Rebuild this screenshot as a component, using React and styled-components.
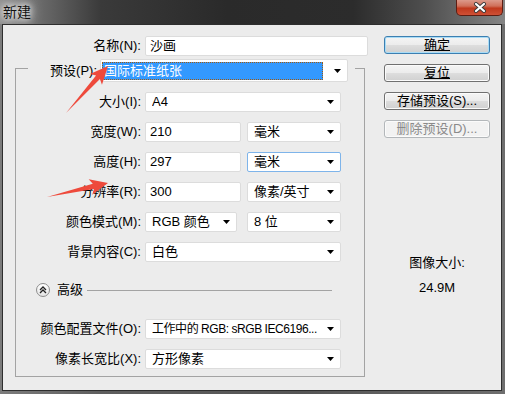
import React from "react";
import styled, { createGlobalStyle } from "styled-components";

const GlobalStyle = createGlobalStyle`
  html, body { margin: 0; padding: 0; }
  body {
    width: 505px;
    height: 394px;
    overflow: hidden;
    background: #747474;
    font-family: "Liberation Sans", "Noto Sans CJK SC", sans-serif;
    font-size: 13px;
    color: #000;
  }
`;

const Window = styled.div`
  position: relative;
  width: 505px;
  height: 394px;
  display: flex;
  flex-direction: column;
  background: linear-gradient(to right, #7c7c7c, #5e5e5e 20%, #555 60%, #6e6e6e);
`;

const TitleBar = styled.div`
  height: 24px;
  display: flex;
  justify-content: space-between;
  align-items: flex-start;
  background: linear-gradient(
    to right,
    #909090 0%,
    #6a6a6a 8%,
    #3a3a3a 20%,
    #2a2a2a 45%,
    #2c2c2c 70%,
    #4e4e4e 84%,
    #858585 100%
  );
`;

const Title = styled.div`
  padding-left: 3px;
  line-height: 22px;
  font-size: 14px;
  font-family: "Noto Sans CJK SC", sans-serif;
  color: #111;
  text-shadow: 0 0 6px #fff, 0 0 10px #eee, 0 0 14px #ddd;
`;

const CloseBtn = styled.div`
  box-sizing: border-box;
  width: 47px;
  height: 16px;
  margin-right: 2px;
  border: 1px solid #5e1d12;
  border-top: none;
  border-radius: 0 0 5px 5px;
  background: linear-gradient(#dc9a8b 0%, #d0705a 40%, #c0391d 55%, #cf5036 100%);
  display: flex;
  align-items: center;
  justify-content: center;
`;

const Client = styled.div`
  box-sizing: border-box;
  width: 500px;
  height: 367px;
  margin-left: 2px;
  border: 1px solid #2e2e2e;
  background: #ececec;
  display: flex;
`;

const LeftCol = styled.div`
  width: 353px;
  margin-left: 12px;
  padding-top: 11px;
`;

const RightCol = styled.div`
  width: 106px;
  margin-left: 16px;
  padding-top: 11px;
  display: flex;
  flex-direction: column;
  gap: 10px;
`;

const Row = styled.div`
  display: flex;
  align-items: center;
  gap: 4px;
  height: 20px;
`;

const Label = styled.div`
  width: ${(p) => p.$w}px;
  text-align: right;
  white-space: nowrap;
  line-height: 20px;
`;

const Input = styled.div`
  box-sizing: border-box;
  width: ${(p) => p.$w}px;
  height: 20px;
  padding: 0 4px;
  background: #fff;
  border: 1px solid #dcdcdc;
  border-radius: 2px;
  line-height: 18px;
  white-space: nowrap;
`;

const SelectBox = styled.div`
  box-sizing: border-box;
  width: ${(p) => p.$w}px;
  height: ${(p) => p.$h || 20}px;
  margin-left: ${(p) => p.$ml || 0}px;
  margin-top: ${(p) => p.$mt || 0}px;
  padding: 0 6px;
  background: #fff;
  border: 1px solid ${(p) => (p.$focus ? "#7eb4ea" : "#dcdcdc")};
  border-radius: 2px;
  display: flex;
  align-items: center;
  gap: 3px;
  flex-shrink: 0;
`;

const SelectText = styled.span`
  flex: 1;
  overflow: hidden;
  white-space: nowrap;
  line-height: 18px;
  font-size: ${(p) => (p.$small ? 12 : 13)}px;
  letter-spacing: ${(p) => (p.$small ? "-0.45px" : "normal")};
`;

const Highlight = styled.span`
  flex: 1;
  align-self: stretch;
  margin: 2px 8px 1px -5px;
  padding-left: 1px;
  background: #3399ff;
  color: #fff;
  border: 1px dotted #a05a10;
  line-height: 15px;
  white-space: nowrap;
`;

const GroupBox = styled.fieldset`
  box-sizing: border-box;
  width: 350px;
  min-width: 0;
  margin: 4px 0 0 0;
  padding: 0 0 7px 0;
  border: 1px solid #a3a3a3;
`;

const Legend = styled.legend`
  margin-left: 12px;
  padding: 0 7px 0 0;
`;

const LegendRow = styled.div`
  display: flex;
  gap: 3px;
  height: 16px;
`;

const LegendLabel = styled.div`
  width: 69px;
  margin-top: -1px;
  text-align: right;
  line-height: 23px;
  white-space: nowrap;
`;

const GroupBody = styled.div`
  padding-top: 16px;
  display: flex;
  flex-direction: column;
  gap: 10px;
`;

const AdvancedRow = styled.div`
  display: flex;
  align-items: center;
  height: 14px;
  margin: 11px 0 12px;
`;

const Toggle = styled.div`
  box-sizing: border-box;
  width: 14px;
  height: 14px;
  margin-left: 20px;
  border-radius: 50%;
  border: 1px solid #8d8d8d;
  background: linear-gradient(#ffffff, #e4e4e4);
  display: flex;
  align-items: center;
  justify-content: center;
`;

const AdvancedText = styled.span`
  margin-left: 7px;
  line-height: 14px;
`;

const Rule = styled.div`
  flex: 1;
  margin: 0 32px 0 4px;
  border-top: 1px solid #a3a3a3;
`;

const Button = styled.div`
  box-sizing: border-box;
  height: 18px;
  border-radius: 3px;
  border: 1px solid
    ${(p) => (p.$primary ? "#3c7fb1" : p.$disabled ? "#b3b7ba" : "#707070")};
  background: ${(p) =>
    p.$disabled
      ? "#f2f2f2"
      : "linear-gradient(#f4f4f4 0%, #ececec 48%, #dddddd 52%, #d0d0d0 100%)"};
  box-shadow: ${(p) => (p.$primary ? "inset 0 0 0 1px #a9dcf6" : "inset 0 0 0 1px #fbfbfb")};
  color: ${(p) => (p.$disabled ? "#8a8a8a" : "#000")};
  text-align: center;
  line-height: 16px;
  white-space: nowrap;
  span {
    text-decoration: ${(p) => (p.$underline ? "underline" : "none")};
    text-underline-offset: 1px;
  }
`;

const Info = styled.div`
  margin-top: 102px;
  text-align: center;
  line-height: 25px;
`;

const Overlay = styled.svg`
  position: absolute;
  left: 0;
  top: 0;
  pointer-events: none;
`;

function DropArrow() {
  return (
    <svg width="7" height="4" viewBox="0 0 7 4">
      <path d="M0 0 H7 L3.5 4 Z" fill="#000" />
    </svg>
  );
}

function Select({ w, ml, focus, small, children }) {
  return (
    <SelectBox $w={w} $ml={ml} $focus={focus}>
      <SelectText $small={small}>{children}</SelectText>
      <DropArrow />
    </SelectBox>
  );
}

function arrowPoints(x1, y1, x2, y2) {
  const dx = x2 - x1;
  const dy = y2 - y1;
  const len = Math.hypot(dx, dy);
  const ux = dx / len;
  const uy = dy / len;
  const nx = -uy;
  const ny = ux;
  const pts = [
    [0, 0],
    [len - 15, -2.6],
    [len - 18, -8],
    [len, 0],
    [len - 18, 8],
    [len - 15, 2.6],
  ];
  return pts.map(([a, b]) => `${x1 + ux * a + nx * b},${y1 + uy * a + ny * b}`).join(" ");
}

export default function App() {
  return (
    <>
      <GlobalStyle />
      <Window>
        <TitleBar>
          <Title>新建</Title>
          <CloseBtn>
            <svg width="14" height="11" viewBox="0 0 14 11">
              <path d="M3 2 L11 9 M11 2 L3 9" stroke="#3a3a3a" strokeWidth="4" strokeLinecap="round" />
              <path d="M3 2 L11 9 M11 2 L3 9" stroke="#fff" strokeWidth="2.2" strokeLinecap="round" />
            </svg>
          </CloseBtn>
        </TitleBar>
        <Client>
          <LeftCol>
            <Row>
              <Label $w={126}>名称(N):</Label>
              <Input $w={223}>沙画</Input>
            </Row>
            <GroupBox>
              <Legend>
                <LegendRow>
                  <LegendLabel>预设(P):</LegendLabel>
                  <SelectBox $w={248} $h={23} $mt={-1}>
                    <Highlight>国际标准纸张</Highlight>
                    <DropArrow />
                  </SelectBox>
                </LegendRow>
              </Legend>
              <GroupBody>
                <Row>
                  <Label $w={125}>大小(I):</Label>
                  <Select w={196}>A4</Select>
                </Row>
                <Row>
                  <Label $w={125}>宽度(W):</Label>
                  <Input $w={96}>210</Input>
                  <Select w={94} ml={2}>毫米</Select>
                </Row>
                <Row>
                  <Label $w={125}>高度(H):</Label>
                  <Input $w={96}>297</Input>
                  <Select w={94} ml={2} focus>毫米</Select>
                </Row>
                <Row>
                  <Label $w={125}>分辨率(R):</Label>
                  <Input $w={96}>300</Input>
                  <Select w={94} ml={2}>像素/英寸</Select>
                </Row>
                <Row>
                  <Label $w={125}>颜色模式(M):</Label>
                  <Select w={92}>RGB 颜色</Select>
                  <Select w={94} ml={6}>8 位</Select>
                </Row>
                <Row>
                  <Label $w={125}>背景内容(C):</Label>
                  <Select w={196}>白色</Select>
                </Row>
                <AdvancedRow>
                  <Toggle>
                    <svg width="8" height="8" viewBox="0 0 8 8">
                      <path d="M1 4 L4 1 L7 4 M1 7 L4 4 L7 7" fill="none" stroke="#222" strokeWidth="1.3" />
                    </svg>
                  </Toggle>
                  <AdvancedText>高级</AdvancedText>
                  <Rule />
                </AdvancedRow>
                <Row>
                  <Label $w={125}>颜色配置文件(O):</Label>
                  <Select w={196} small>工作中的 RGB: sRGB IEC6196...</Select>
                </Row>
                <Row>
                  <Label $w={125}>像素长宽比(X):</Label>
                  <Select w={196}>方形像素</Select>
                </Row>
              </GroupBody>
            </GroupBox>
          </LeftCol>
          <RightCol>
            <Button $primary $underline>
              <span>确定</span>
            </Button>
            <Button $underline>
              <span>复位</span>
            </Button>
            <Button>
              <span>存储预设(S)...</span>
            </Button>
            <Button $disabled>
              <span>删除预设(D)...</span>
            </Button>
            <Info>
              <div>图像大小:</div>
              <div>24.9M</div>
            </Info>
          </RightCol>
        </Client>
        <Overlay width="505" height="394">
          <polygon points={arrowPoints(66, 113, 108, 66)} fill="#ee4a3c" />
          <polygon points={arrowPoints(47, 197, 108, 183)} fill="#ee4a3c" />
        </Overlay>
      </Window>
    </>
  );
}
